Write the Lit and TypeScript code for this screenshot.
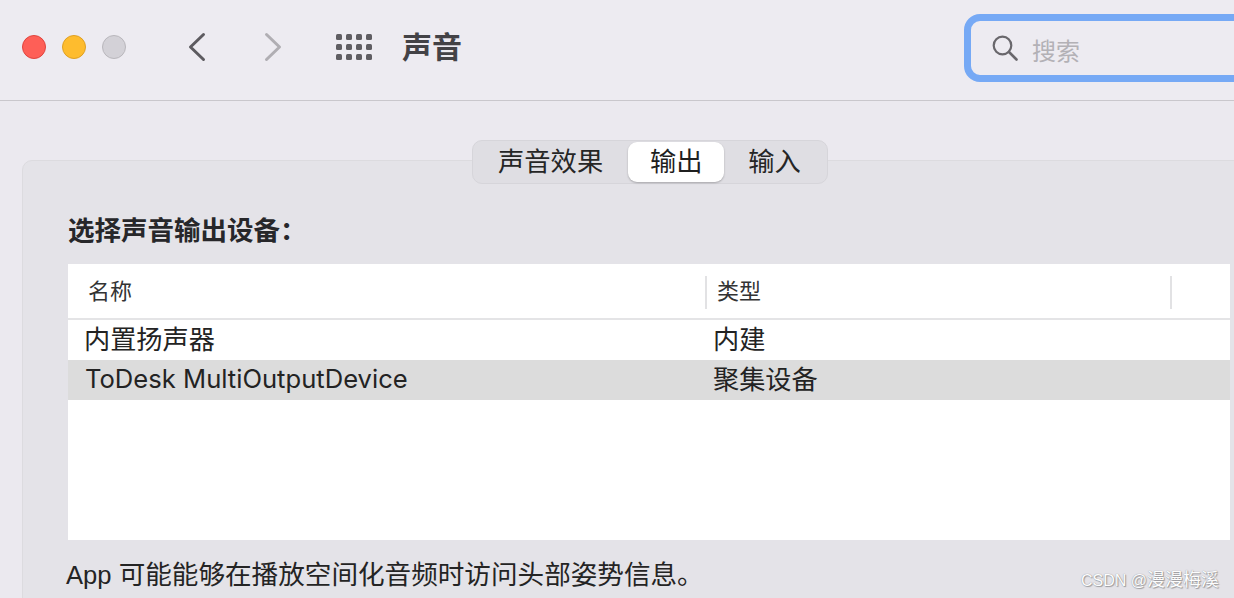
import { LitElement, html, css } from "lit";
import { customElement } from "lit/decorators.js";

@customElement("app-root")
export class AppRoot extends LitElement {
  static styles = css`
    :host {
      display: block;
      width: 1234px;
      height: 598px;
      overflow: hidden;
      background: #ebe9ef;
      color: #262626;
      font-family: "Liberation Sans", "Noto Sans CJK SC", sans-serif;
      font-size: 26px;
    }
    .toolbar {
      box-sizing: border-box;
      height: 101px;
      background: #edebf1;
      border-bottom: 1px solid #c9c7cc;
      display: flex;
      align-items: center;
      padding-left: 22px;
      padding-bottom: 6px;
      white-space: nowrap;
    }
    .lights { display: flex; gap: 16px; }
    .light { box-sizing: border-box; width: 24px; height: 24px; border-radius: 50%; border: 1px solid; }
    .red { background: #fe5f57; border-color: #e0443e; }
    .yellow { background: #febc2e; border-color: #dfa023; }
    .gray { background: #d3d1d7; border-color: #b9b7bc; }
    .nav { display: flex; margin-left: 61px; gap: 56px; }
    .nav svg { display: block; }
    .apps { display: grid; grid-template-columns: repeat(4, 6px); grid-auto-rows: 6px; gap: 4px; margin-left: 53px; }
    .apps i { background: #5f5d62; border-radius: 1.500px; }
    .title { margin: 2px 0 0 30px; font-size: 30px; font-weight: 700; color: #434246; line-height: 36px; }
    .search {
      box-sizing: border-box;
      margin-left: auto;
      margin-right: -20px;
      margin-top: 1px;
      width: 290px;
      height: 68px;
      border: 7px solid #76a9f5;
      border-radius: 16px;
      display: flex;
      align-items: center;
      padding-left: 21px;
      gap: 14px;
      color: #b3b1b6;
      font-size: 24px;
    }
    .search span { margin-top: 3px; }
    .content { position: relative; padding: 59px 0 0 22px; }
    .panel {
      box-sizing: border-box;
      height: 500px;
      margin-right: -20px;
      background: #e4e3e8;
      border: 1px solid #dcdbdf;
      border-radius: 10px;
      padding: 54px 0 0 45px;
    }
    .tabs {
      position: absolute;
      left: 472px;
      top: 39px;
      box-sizing: border-box;
      width: 356px;
      height: 44px;
      display: flex;
      align-items: center;
      padding-left: 25px;
      background: #dfdee3;
      border: 1px solid #d6d5da;
      border-radius: 10px;
      line-height: 40px;
      font-size: 26.300px;
    }
    .tab-sel {
      box-sizing: border-box;
      width: 96px;
      height: 40px;
      margin-left: 25px;
      text-align: center;
      background: #fff;
      border-radius: 9px;
      box-shadow: 0 1px 2px rgba(0, 0, 0, 0.25);
      color: #1f1f1f;
    }
    .tab-last { margin-left: 24px; }
    h2 { margin: 0; font-size: 26.500px; font-weight: 700; line-height: 32px; height: 49px; color: #27272a; }
    .table { width: 1162px; height: 276px; background: #fff; }
    .head {
      box-sizing: border-box;
      height: 56px;
      border-bottom: 2px solid #e4e4e6;
      display: grid;
      grid-template-columns: 639px 465px 1fr;
      padding-top: 12px;
      font-size: 22px;
      color: #333;
      line-height: 32px;
    }
    .head span { padding-left: 10px; height: 33px; border-right: 2px solid #e2e2e4; }
    .head span:first-child { padding-left: 20px; }
    .head span:last-child { border: 0; }
    .row { display: grid; grid-template-columns: 629px 1fr; height: 40px; line-height: 40px; padding-left: 16px; color: #232323; font-size: 26.200px; }
    .row.sel { background: #dcdcdc; }
    .latin-row { font-family: Inter, "Noto Sans CJK SC", sans-serif; font-size: 25.600px; margin-left: 1px; margin-top: -1px; }
    .note { margin: 17px 0 0 -2px; line-height: 36px; font-size: 26.600px; color: #242424; white-space: nowrap; }
    .note span { font-size: 25.600px; }
    .mark {
      position: absolute;
      right: 15px;
      top: 467px;
      font-size: 18px;
      line-height: 24px;
      color: #fff;
      opacity: 0.95;
      text-shadow: 0 0 1px #7d7d80, 1px 1px 1px #9a9a9d;
    }
    .mark span { font-size: 16px; }
  `;

  render() {
    return html`
      <div class="toolbar">
        <div class="lights">
          <div class="light red"></div>
          <div class="light yellow"></div>
          <div class="light gray"></div>
        </div>
        <div class="nav">
          <svg width="20" height="32" viewBox="0 0 20 32" fill="none" stroke="#5d5b60" stroke-width="3" stroke-linecap="round" stroke-linejoin="round">
            <path d="M16.500 3.500 L3.500 16 L16.500 28.500" />
          </svg>
          <svg width="20" height="32" viewBox="0 0 20 32" fill="none" stroke="#b0aeb3" stroke-width="3" stroke-linecap="round" stroke-linejoin="round">
            <path d="M3.500 3.500 L16.500 16 L3.500 28.500" />
          </svg>
        </div>
        <div class="apps">
          ${Array.from({ length: 12 }, () => html`<i></i>`)}
        </div>
        <div class="title">声音</div>
        <div class="search">
          <svg width="26" height="26" viewBox="0 0 26 26" fill="none" stroke="#69676c" stroke-width="2.200" stroke-linecap="round">
            <circle cx="10.500" cy="10.500" r="8.800" />
            <path d="M17 17 L24.500 24.500" stroke-width="2.600" />
          </svg>
          <span>搜索</span>
        </div>
      </div>
      <div class="content">
        <div class="panel">
          <h2>选择声音输出设备：</h2>
          <div class="table">
            <div class="head"><span>名称</span><span>类型</span><span></span></div>
            <div class="row"><span>内置扬声器</span><span>内建</span></div>
            <div class="row sel"><span class="latin-row">ToDesk MultiOutputDevice</span><span>聚集设备</span></div>
          </div>
          <div class="note"><span>App </span>可能能够在播放空间化音频时访问头部姿势信息。</div>
        </div>
        <div class="tabs">
          <span>声音效果</span>
          <div class="tab-sel">输出</div>
          <span class="tab-last">输入</span>
        </div>
        <div class="mark"><span>CSDN @</span>漫漫梅溪</div>
      </div>
    `;
  }
}
